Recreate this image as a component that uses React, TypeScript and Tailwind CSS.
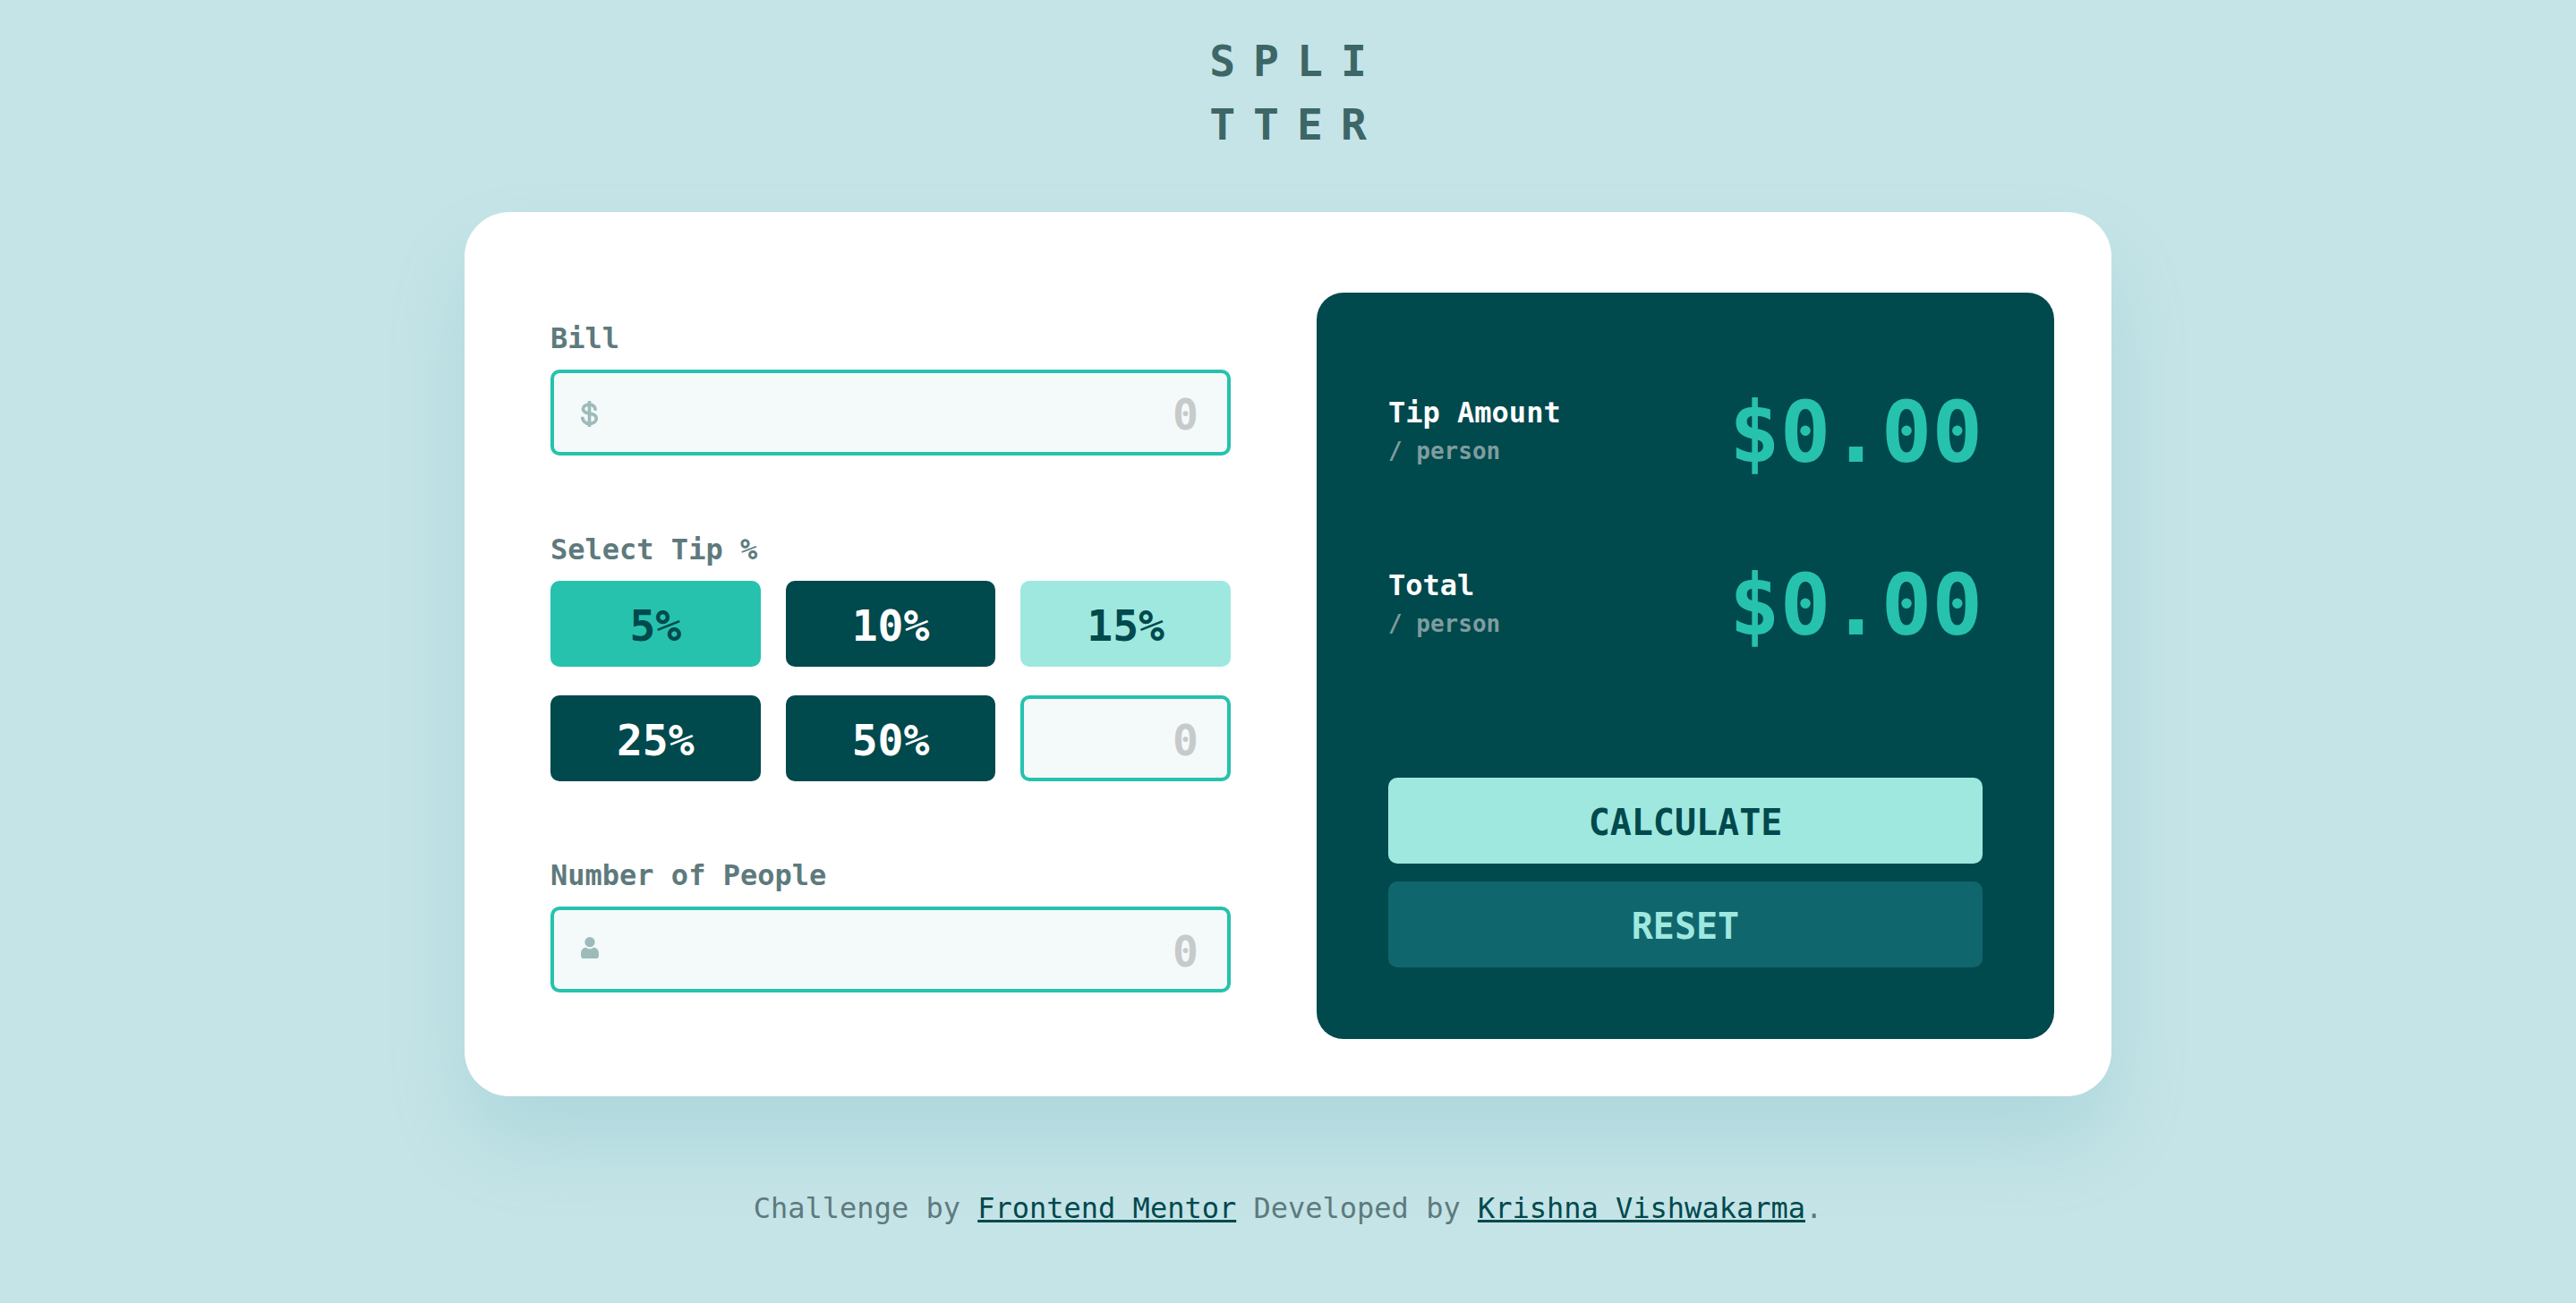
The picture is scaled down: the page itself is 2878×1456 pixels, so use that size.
import { useState } from "react";

const FIELD =
  "h-24 w-full rounded-[10px] border-4 border-[#26c2ae] bg-[#f4fafa] pt-1 pr-8 text-right text-[48px] font-bold text-[#00494d] placeholder:text-[#c7cacb] outline-none";
const LABEL = "block text-[32px] leading-[50px] font-bold text-[#5e7a7d]";
const TIP = "h-24 rounded-[10px] pt-1 text-center text-[48px] font-bold";
const DARK = "bg-[#00494d] text-white";

const tips = [
  { value: 5, tone: "bg-[#26c2ae] text-[#00494d]" },
  { value: 10, tone: DARK },
  { value: 15, tone: "bg-[#9fe8df] text-[#00494d]" },
  { value: 25, tone: DARK },
  { value: 50, tone: DARK },
];

function DollarIcon() {
  return (
    <svg viewBox="0 0 56 86" className="h-[29px] w-[19px]" fill="none" stroke="#9dbbba" strokeWidth="11" aria-hidden="true">
      <path d="M28 0V86" />
      <path d="M48 32C48 20 41 12 28 12C15 12 7 18 7 27C7 37 16 40 28 42C42 44 51 48 51 58C51 68 41 75 28 75C13 75 5 65 5 53" />
    </svg>
  );
}

function PersonIcon() {
  return (
    <svg viewBox="0 0 60 72" className="h-6 w-5" fill="#9dbbba" aria-hidden="true">
      <circle cx="30" cy="17" r="17" />
      <path d="M15 35C20 35 22 40 30 40C38 40 40 35 45 35C53 36 60 44 60 56V62Q60 72 50 72H10Q0 72 0 62V56C0 44 7 36 15 35Z" />
    </svg>
  );
}

function Result({ name, value }: { name: string; value: number }) {
  return (
    <div className="flex items-center justify-between">
      <div>
        <h2 className="text-[32px] leading-[48px] font-bold text-white">{name}</h2>
        <p className="text-[26px] leading-[38px] font-bold text-[#7f9d9f]">/ person</p>
      </div>
      <output className="pt-2 text-[94px] leading-[142px] font-bold text-[#26c2ae]">${value.toFixed(2)}</output>
    </div>
  );
}

export default function App() {
  const [bill, setBill] = useState("");
  const [people, setPeople] = useState("");
  const [custom, setCustom] = useState("");
  const [tip, setTip] = useState(5);
  const [result, setResult] = useState({ tip: 0, total: 0 });

  const calculate = () => {
    const amount = Number(bill) || 0;
    const count = Number(people) || 1;
    const extra = (amount * (custom ? Number(custom) || 0 : tip)) / 100;
    setResult({ tip: extra / count, total: (amount + extra) / count });
  };

  const reset = () => {
    setBill("");
    setPeople("");
    setCustom("");
    setTip(5);
    setResult({ tip: 0, total: 0 });
  };

  return (
    <div className="flex min-h-screen flex-col items-center bg-[#c5e4e7] pt-[33px] font-['DejaVu_Sans_Mono',monospace]">
      <h1 className="pl-5 text-[48px] leading-[71px] font-bold tracking-[20px] text-[#3d6666]">
        SPLI
        <br />
        TTER
      </h1>

      <main className="mt-[62px] grid w-full max-w-[1840px] grid-cols-[760fr_824fr] gap-24 rounded-[50px] bg-white pt-[90px] pr-16 pb-16 pl-24 shadow-[0_50px_90px_0_#add7dc]">
        <section className="flex flex-col gap-20 pt-[26px] pb-[52px]">
          <div>
            <label htmlFor="bill" className={LABEL}>Bill</label>
            <div className="relative mt-[10px]">
              <span className="pointer-events-none absolute top-[35px] left-[34px]"><DollarIcon /></span>
              <input id="bill" inputMode="decimal" placeholder="0" className={FIELD} value={bill} onChange={(e) => setBill(e.target.value)} />
            </div>
          </div>

          <div role="group" aria-labelledby="tip-label">
            <p id="tip-label" className={LABEL}>Select Tip %</p>
            <div className="mt-[10px] grid grid-cols-3 gap-x-7 gap-y-8">
              {tips.map(({ value, tone }) => (
                <button key={value} type="button" className={`${TIP} ${tone}`} onClick={() => setTip(value)}>
                  {value}%
                </button>
              ))}
              <input aria-label="Custom tip percentage" inputMode="decimal" placeholder="0" className={FIELD} value={custom} onChange={(e) => setCustom(e.target.value)} />
            </div>
          </div>

          <div>
            <label htmlFor="people" className={LABEL}>Number of People</label>
            <div className="relative mt-[10px]">
              <span className="pointer-events-none absolute top-[34px] left-[34px]"><PersonIcon /></span>
              <input id="people" inputMode="numeric" placeholder="0" className={FIELD} value={people} onChange={(e) => setPeople(e.target.value)} />
            </div>
          </div>
        </section>

        <section className="flex flex-col justify-between rounded-[30px] bg-[#00494d] px-20 pt-[78px] pb-20">
          <div className="flex flex-col gap-[43px]">
            <Result name="Tip Amount" value={result.tip} />
            <Result name="Total" value={result.total} />
          </div>
          <div className="flex flex-col gap-5">
            <button type="button" onClick={calculate} className="h-24 rounded-[10px] bg-[#9fe8df] pt-1 text-[40px] font-bold text-[#00494d]">
              CALCULATE
            </button>
            <button type="button" onClick={reset} className="h-24 rounded-[10px] bg-[#10666d] pt-1 text-[40px] font-bold text-[#9fe8df]">
              RESET
            </button>
          </div>
        </section>
      </main>

      <footer className="mt-[101px] text-[32px] leading-[48px] text-[#5e7a7d]">
        Challenge by{" "}
        <a href="#frontend-mentor" className="text-[#00494d] underline">Frontend Mentor</a>{" "}
        Developed by{" "}
        <a href="#krishna-vishwakarma" className="text-[#00494d] underline">Krishna Vishwakarma</a>.
      </footer>
    </div>
  );
}
